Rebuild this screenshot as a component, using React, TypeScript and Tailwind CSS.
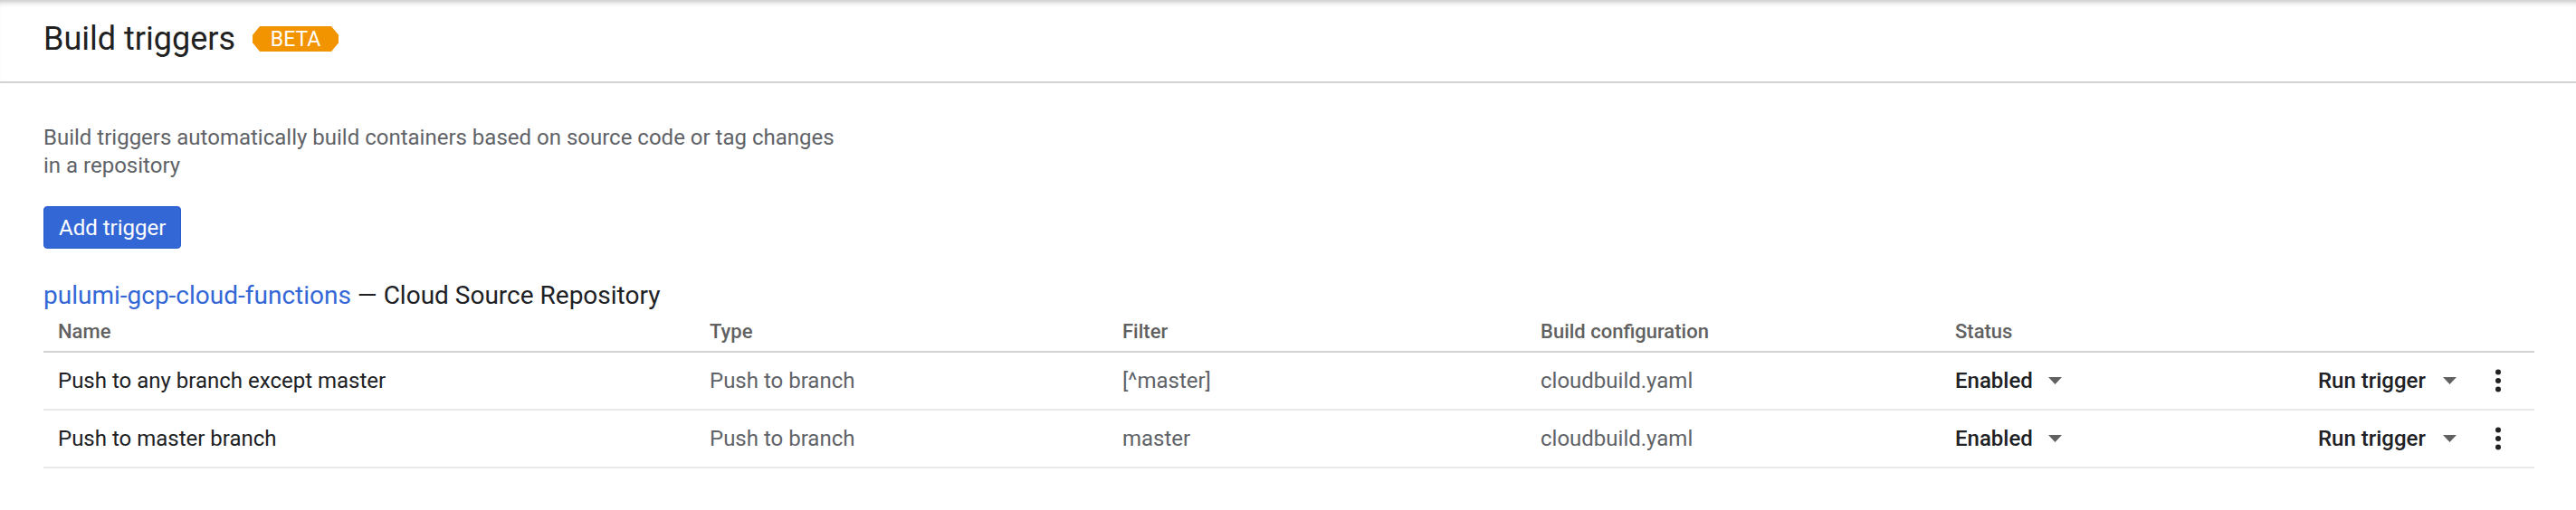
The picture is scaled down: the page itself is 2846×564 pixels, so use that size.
import React from 'react';

interface Trigger {
  name: string;
  type: string;
  filter: string;
  config: string;
}

const triggers: Trigger[] = [
  { name: 'Push to any branch except master', type: 'Push to branch', filter: '[^master]', config: 'cloudbuild.yaml' },
  { name: 'Push to master branch', type: 'Push to branch', filter: 'master', config: 'cloudbuild.yaml' },
];

// column widths measured off the table
const gridCols = 'grid grid-cols-[720px_456px_462px_458px_401px_1fr]';

const Caret = () => (
  <svg width="15" height="8" viewBox="0 0 15 8" className="shrink-0">
    <polygon points="0,0 15,0 7.5,8" fill="#616161" />
  </svg>
);

const MoreVert = () => (
  <svg width="10" height="30" viewBox="0 0 10 30" className="shrink-0">
    <circle cx="5" cy="5.5" r="3" fill="#202124" />
    <circle cx="5" cy="15" r="3" fill="#202124" />
    <circle cx="5" cy="24.5" r="3" fill="#202124" />
  </svg>
);

const App = () => {
  return (
    <div className="min-h-[564px] w-full bg-white text-[#202124] font-['Roboto','Liberation_Sans',sans-serif]">
      {/* page header */}
      <div className="h-[92px] flex items-center gap-[19px] px-[48px] pb-[4px] border-b-2 border-[#d3d3d3] shadow-[inset_0_7px_6px_-5px_rgba(0,0,0,0.25)]">
        <h1 className="text-[36px] leading-[42px] font-normal text-[#212121]">Build triggers</h1>
        <span className="h-[28px] w-[95px] flex items-center justify-center bg-[#f29400] text-white text-[23px] leading-none [clip-path:polygon(8px_0,calc(100%-8px)_0,100%_35%,100%_65%,calc(100%-8px)_100%,8px_100%,0_65%,0_35%)]">
          BETA
        </span>
      </div>

      <div className="px-[48px] pt-[45px]">
        <p className="max-w-[880px] text-[24px] leading-[31px] text-[#5f6368]">
          Build triggers automatically build containers based on source code or tag changes in a repository
        </p>

        <button className="mt-[29px] h-[47px] px-[16px] flex items-center rounded-[4px] border border-[#2a5ccc] bg-[#3367d6] text-white text-[24px] leading-none">
          Add trigger
        </button>

        <div className="mt-[35px] text-[28px] leading-[34px]">
          <a className="text-[#3367d6]">pulumi-gcp-cloud-functions</a>
          <span className="text-[#202124]"> — Cloud Source Repository</span>
        </div>

        <div className="mr-[-2px]">
          <div className={`${gridCols} mt-[10px] pb-[8px] border-b-2 border-[#d3d3d3] text-[22px] leading-[26px] font-medium text-[#616161]`}>
            <div className="px-[16px]">Name</div>
            <div className="px-[16px]">Type</div>
            <div className="px-[16px]">Filter</div>
            <div className="px-[16px]">Build configuration</div>
            <div className="px-[16px]">Status</div>
            <div />
          </div>

          {triggers.map((t) => (
            <div key={t.name} className={`${gridCols} h-[64px] items-center border-b-2 border-[#e8e8e8] text-[24px] leading-[28px]`}>
              <div className="px-[16px] text-[#202124]">{t.name}</div>
              <div className="px-[16px] text-[#5f6368]">{t.type}</div>
              <div className="px-[16px] text-[#5f6368]">{t.filter}</div>
              <div className="px-[16px] text-[#5f6368]">{t.config}</div>
              <div className="px-[16px] flex items-center gap-[17px] font-medium text-[#202124]">
                <span>Enabled</span>
                <Caret />
              </div>
              <div className="pl-[16px] flex items-center font-medium text-[#202124]">
                <span>Run trigger</span>
                <span className="ml-[19px]">
                  <Caret />
                </span>
                <span className="ml-[41px]">
                  <MoreVert />
                </span>
              </div>
            </div>
          ))}
        </div>
      </div>
    </div>
  );
};

export default App;
